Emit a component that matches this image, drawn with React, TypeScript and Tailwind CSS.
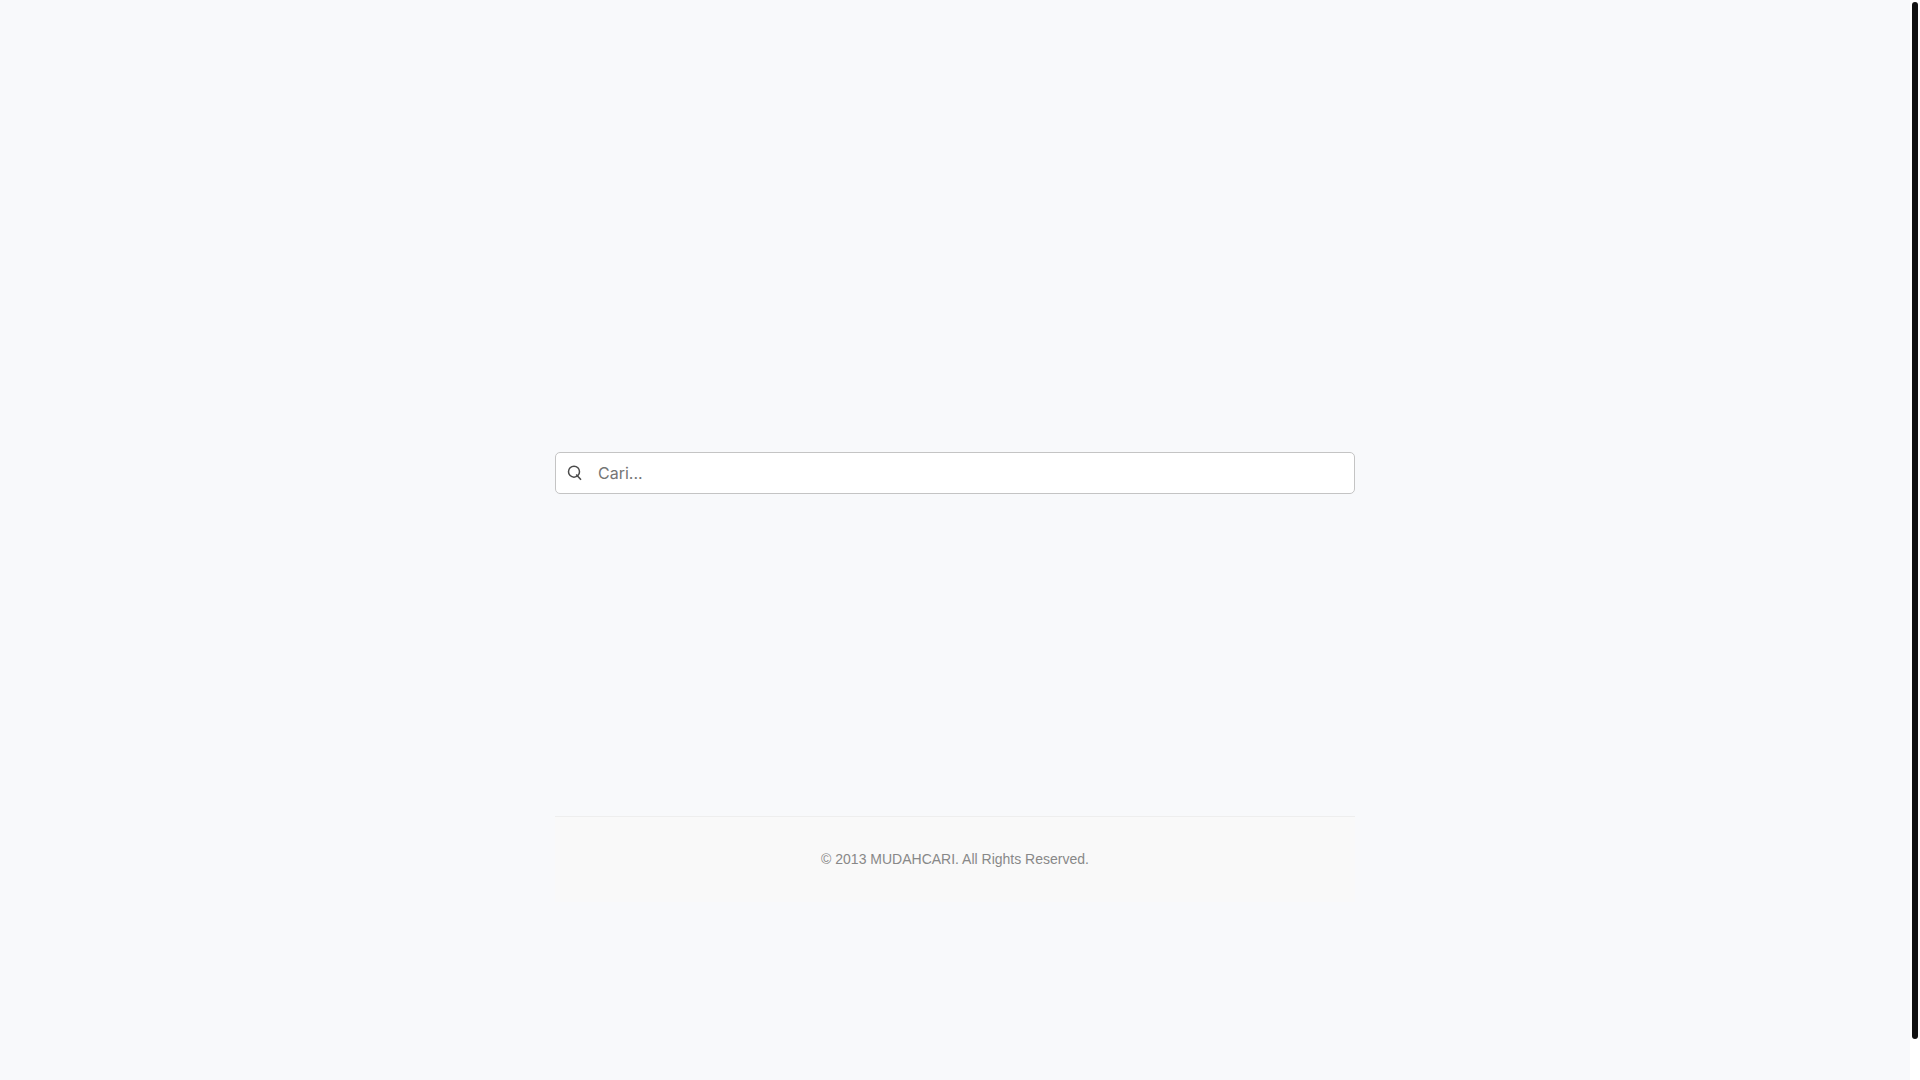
function SearchIcon() {
  return (
    <svg
      width="20"
      height="20"
      viewBox="0 0 20 20"
      fill="none"
      stroke="#4a4a4a"
      strokeWidth="1.5"
      aria-hidden="true"
    >
      <circle cx="9" cy="8.7" r="5.5" />
      <path d="M11.2 11.4 L16 16.8" />
    </svg>
  );
}

function SearchForm() {
  return (
    <form
      role="search"
      className="flex items-center h-[42px] pl-[9px] bg-white border border-[#c4c4c4] rounded-[5px]"
    >
      <label htmlFor="search" aria-label="Cari">
        <SearchIcon />
      </label>
      <input
        id="search"
        type="text"
        placeholder="Cari..."
        className="flex-1 min-w-0 h-full ml-[13px] pr-3 bg-transparent text-base text-gray-800 placeholder:text-[#757575] outline-none"
      />
    </form>
  );
}

function Footer() {
  return (
    <footer className="py-8 bg-[#f9f9f9] border-t border-[#eeeeee] text-center text-sm leading-[21px] text-[#888888] font-['Liberation_Sans',Arial,sans-serif]">
      <p>© 2013 MUDAHCARI. All Rights Reserved.</p>
    </footer>
  );
}

function ScrollBar() {
  return (
    <div aria-hidden="true" className="flex w-[10px] h-screen px-0.5 pt-0.5 pb-[41px] bg-white">
      <div className="flex-1 rounded-[3px] bg-[#111111]" />
    </div>
  );
}

export default function App() {
  return (
    <div className="flex min-h-screen bg-[#f8f9fb] font-['Inter',sans-serif]">
      <div className="flex-1 min-w-0">
        <div className="w-full max-w-[800px] mx-auto">
          <main className="pt-[452px] pb-[322px]">
            <SearchForm />
          </main>
          <Footer />
        </div>
      </div>
      <ScrollBar />
    </div>
  );
}
